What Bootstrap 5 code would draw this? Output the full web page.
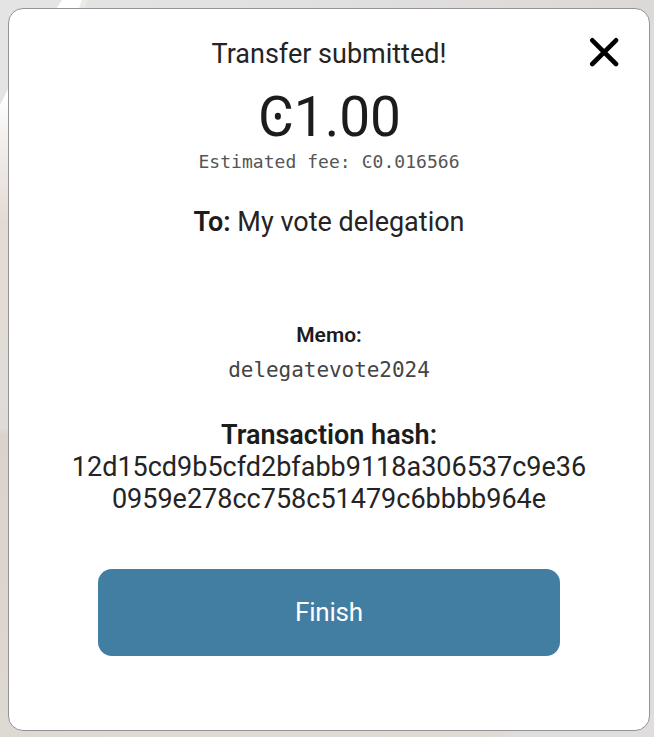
<!DOCTYPE html>
<html lang="en">
<head>
<meta charset="utf-8">
<meta name="viewport" content="width=device-width, initial-scale=1">
<title>Transfer submitted</title>
<link href="https://cdn.jsdelivr.net/npm/bootstrap@5.3.0/dist/css/bootstrap.min.css" rel="stylesheet">
<style>
body{font-family:Roboto,sans-serif;color:#1c1c1c;background:#dfdad6;width:654px;height:737px}
.backdrop-art{z-index:-1}
.receipt{margin:8px 4px 6px 8px;height:723px;border:1.5px solid #939395;border-radius:15px;padding-top:29px}
.line-main{font-size:27px;line-height:32px;font-weight:400;color:#242424}
.line-main strong{font-weight:600;color:#1c1c1c}
.amount{font-size:55px;line-height:64px;font-weight:400;margin-top:15px;padding-left:1px}
.fee{font:18px/22px "DejaVu Sans Mono",monospace;color:#555;margin-top:2px;letter-spacing:.04px}
.recipient{margin-top:33px}
.memo-label{font-size:21px;line-height:24px;font-weight:600;margin-top:85px}
.memo-text{font:21px/26px "DejaVu Sans Mono",monospace;color:#444;margin-top:10px;letter-spacing:-.05px}
.hash-block{margin-top:36px}
.ccd{display:inline-block;position:relative}
.ccd::after{content:"";position:absolute;left:56%;top:49%;width:.115em;height:.115em;border-radius:50%;background:currentColor;transform:translate(-50%,-50%)}
.close-btn{top:28px;right:30px;line-height:0}
.btn-finish{width:462px;height:87px;margin-top:54px;border-radius:14px;font-size:26px;letter-spacing:-.2px;--bs-btn-bg:#427da2;--bs-btn-color:#fff;--bs-btn-hover-bg:#386d8f;--bs-btn-hover-color:#fff}
</style>
</head>
<body class="position-relative overflow-hidden">
<svg class="backdrop-art position-absolute top-0 start-0" width="654" height="737" aria-hidden="true">
  <defs>
    <linearGradient id="top"><stop offset="0" stop-color="#e4e4e4"/><stop offset=".45" stop-color="#e2e1e0"/><stop offset="1" stop-color="#dcd8d5"/></linearGradient>
    <linearGradient id="left" x2="0" y2="1"><stop offset="0" stop-color="#e4e4e4"/><stop offset=".13" stop-color="#fff"/><stop offset=".19" stop-color="#f2efed"/><stop offset=".3" stop-color="#e5dbd5"/><stop offset=".58" stop-color="#dfdcd8"/><stop offset=".59" stop-color="#dbd2cc"/><stop offset="1" stop-color="#ded9d2"/></linearGradient>
    <linearGradient id="base"><stop offset="0" stop-color="#ded9d3"/><stop offset=".76" stop-color="#dfdad5"/><stop offset=".79" stop-color="#dfdedd"/><stop offset="1" stop-color="#e0dedd"/></linearGradient>
  </defs>
  <path fill="url(#top)" d="M0 0H654V30H0z"/>
  <path fill="url(#left)" d="M0 0H20V737H0z"/>
  <path fill="#dfdbd8" d="M645 20H654V737H645z"/>
  <path fill="#e4e4e4" d="M0 0H62L54 12H10V85L0 105z"/>
  <path fill="#fff" d="M62 0H82L78 12H54z"/>
  <path fill="#eee9e6" d="M82 0H88L83 12H78z"/>
  <path fill="url(#base)" d="M0 715H654V737H0z"/>
</svg>
<main class="receipt card position-relative text-center align-items-center">
  <button type="button" class="close-btn btn p-0 border-0 position-absolute" aria-label="Close">
    <svg width="30" height="30" viewBox="0 0 30 30" fill="none" stroke="#000" stroke-width="4.6" stroke-linecap="round"><path d="M3.3 3.3 27 27M27 3.3 3.3 27"/></svg>
  </button>
  <div class="line-main">Transfer submitted!</div>
  <div class="amount"><span class="ccd">C</span>1.00</div>
  <div class="fee">Estimated fee: <span class="ccd">C</span>0.016566</div>
  <div class="line-main recipient"><strong>To:</strong> My vote delegation</div>
  <div class="memo-label">Memo:</div>
  <div class="memo-text">delegatevote2024</div>
  <div class="line-main hash-block"><strong>Transaction hash:</strong><br>12d15cd9b5cfd2bfabb9118a306537c9e36<br>0959e278cc758c51479c6bbbb964e</div>
  <button type="button" class="btn btn-finish border-0">Finish</button>
</main>
<script src="https://cdn.jsdelivr.net/npm/bootstrap@5.3.0/dist/js/bootstrap.bundle.min.js"></script>
</body>
</html>
